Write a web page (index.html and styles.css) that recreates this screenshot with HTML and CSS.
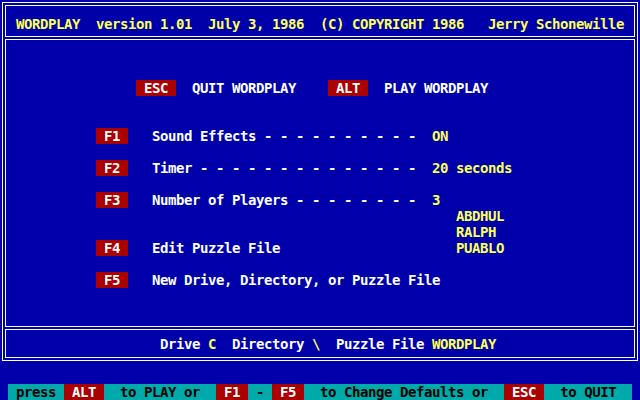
FILE: index.html
```html
<!DOCTYPE html>
<html>
<head>
<meta charset="utf-8">
<link rel="stylesheet" href="styles.css">
</head>
<body>
<div class="screen">
  <div class="frame">
    <div class="box header">
      <div class="row">WORDPLAY  version 1.01  July 3, 1986  (C) COPYRIGHT 1986   Jerry Schonewille</div>
    </div>
    <div class="box main">
      <div class="row">     <span class="key"> ESC </span>  QUIT WORDPLAY    <span class="key"> ALT </span>  PLAY WORDPLAY</div>
      <div class="row"></div>
      <div class="row"></div>
      <div class="row"><span class="key"> F1 </span>   Sound Effects - - - - - - - - - -  <span class="val">ON</span></div>
      <div class="row"></div>
      <div class="row"><span class="key"> F2 </span>   Timer - - - - - - - - - - - - - -  <span class="val">20 seconds</span></div>
      <div class="row"></div>
      <div class="row"><span class="key"> F3 </span>   Number of Players - - - - - - - -  <span class="val">3</span></div>
      <div class="row names"><span class="val">ABDHUL</span></div>
      <div class="row names"><span class="val">RALPH</span></div>
      <div class="row"><span class="key"> F4 </span>   Edit Puzzle File                      <span class="val">PUABLO</span></div>
      <div class="row"></div>
      <div class="row"><span class="key"> F5 </span>   New Drive, Directory, or Puzzle File</div>
    </div>
    <div class="box footer">
      <div class="row">Drive <span class="val">C</span>  Directory <span class="val">\</span>  Puzzle File <span class="val">WORDPLAY</span></div>
    </div>
  </div>
  <div class="bar"><div class="row"> press <span class="key"> ALT </span>  to PLAY or  <span class="key"> F1 </span> - <span class="key"> F5 </span>  to Change Defaults or  <span class="key"> ESC </span>  to QUIT  </div></div>
</div>
</body>
</html>
```

FILE: styles.css
```css
html, body {
  margin: 0;
  padding: 0;
  background: #0000aa;
}

.screen {
  width: 640px;
  height: 400px;
  overflow: hidden;
  background: #0000aa;
  font-family: "DejaVu Sans Mono", "Liberation Mono", monospace;
  font-weight: bold;
  font-size: 14px;
  letter-spacing: -0.4287px;
  color: #ffffff;
}

.row {
  height: 16px;
  line-height: 16px;
  white-space: pre;
}

.frame {
  box-sizing: border-box;
  margin: 2px 0 0 2px;
  width: 636px;
  height: 359px;
  border: 1px solid #ffffff;
  padding: 2px;
  display: flex;
  flex-direction: column;
  gap: 2px;
}

.box {
  box-sizing: border-box;
  border: 1px solid #ffffff;
}

.header {
  height: 32px;
  padding: 10px 0 0 10px;
  color: #ffff55;
}

.main {
  height: 288px;
  padding: 40px 0 0 90px;
}

.footer {
  height: 29px;
  padding: 6px 0 0 154px;
}

.names {
  padding-left: 360px;
}

.key {
  background: #aa0000;
  color: #ffffff;
}

.val {
  color: #ffff55;
}

.bar {
  margin: 23px 0 0 8px;
  width: 624px;
  background: #00aaaa;
  color: #000000;
}

.bar .key {
  color: #ffffff;
}
```
